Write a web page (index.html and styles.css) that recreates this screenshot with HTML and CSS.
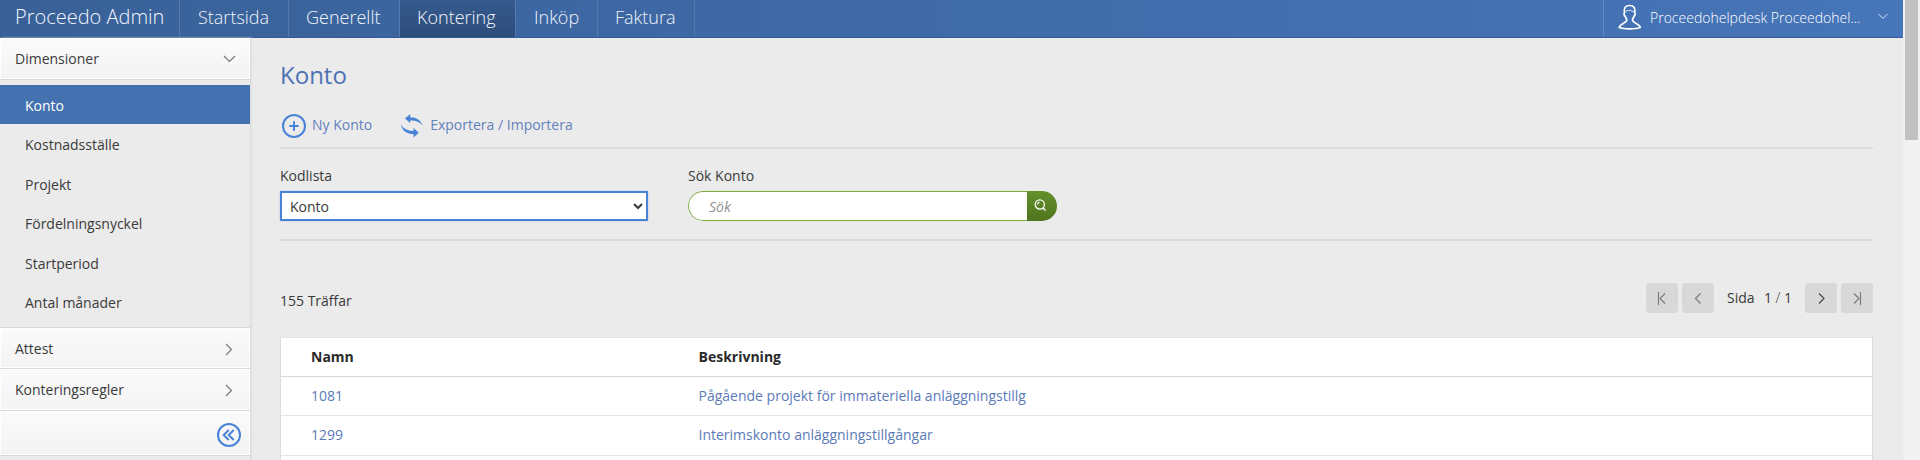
FILE: index.html
```html
<!DOCTYPE html>
<html lang="sv">
<head>
<meta charset="utf-8">
<title>Proceedo Admin</title>
<link rel="stylesheet" href="styles.css">
</head>
<body>
<div class="app">
  <div class="page">
    <header class="topbar">
      <div class="brand"><span>Proceedo Admin</span></div>
      <nav class="tabs">
        <a class="tab tab-start">Startsida</a>
        <a class="tab tab-general">Generellt</a>
        <a class="tab tab-accounting active">Kontering</a>
        <a class="tab tab-purchase">Inköp</a>
        <a class="tab tab-invoice">Faktura</a>
      </nav>
      <div class="user">
        <svg class="user-icon" width="24" height="26" viewBox="0 0 24 26"><path d="M8.700 16C8.700 14.500 7.700 14 7.200 12.200C5.800 11.500 5.800 9.500 6.400 8.700C5.600 4 7.600 1.500 11.600 1.500S17.600 4 16.800 8.700C17.400 9.500 17.400 11.500 16 12.200C15.500 14 14.500 14.500 14.500 16C14.500 19 22 20 22.300 23.500C18 25.300 5.500 25.300 1.200 23.500C1.500 20 8.700 19 8.700 16Z"/><path d="M7.300 8.200C9 5.500 11 7.200 12.300 6.100C13.500 7.400 15 7 16 8.200"/></svg>
        <span class="user-name">Proceedohelpdesk Proceedohel...</span>
        <svg class="user-caret" width="10" height="7" viewBox="0 0 10 7"><path d="M.5 1L5 5.500L9.500 1"/></svg>
      </div>
    </header>
    <div class="body">
      <aside class="sidebar">
        <div class="panel first"><span>Dimensioner</span><svg width="13" height="8" viewBox="0 0 13 8"><path d="M1 1L6.500 6.500L12 1"/></svg></div>
        <ul class="menu">
          <li class="selected">Konto</li>
          <li>Kostnadsställe</li>
          <li>Projekt</li>
          <li>Fördelningsnyckel</li>
          <li>Startperiod</li>
          <li>Antal månader</li>
        </ul>
        <div class="panel short"><span>Attest</span><svg class="right" width="8" height="13" viewBox="0 0 8 13"><path d="M1 1L6.500 6.500L1 12"/></svg></div>
        <div class="panel tall"><span>Konteringsregler</span><svg class="right" width="8" height="13" viewBox="0 0 8 13"><path d="M1 1L6.500 6.500L1 12"/></svg></div>
        <div class="panel collapse"><svg width="24" height="24" viewBox="0 0 24 24"><circle cx="12" cy="12" r="11"/><path d="M11.700 7L6.700 12L11.700 17M16.700 7L11.700 12L16.700 17"/></svg></div>
      </aside>
      <main class="content">
        <h1>Konto</h1>
        <div class="actions">
          <a class="action"><svg width="24" height="24" viewBox="0 0 24 24"><circle cx="12" cy="12" r="11"/><path d="M12 7.300V16.700M7.300 12H16.700"/></svg>Ny Konto</a>
          <a class="action sync"><svg width="24" height="24" viewBox="0 0 24 24"><path class="fill" d="M5 4.500L10.200 0V3.200C16.500 3.200 21 6.500 22.800 11.700C19.500 7.500 15 6.100 10.200 6.500V9Z"/><path class="fill" d="M18.800 18.700L13.600 23.500V20.200C7.500 20.200 2 17 .8 10.500C4 15.500 8.800 17 13.600 16.700V14Z"/></svg>Exportera / Importera</a>
        </div>
        <div class="filters">
          <label class="field"><span>Kodlista</span><select><option>Konto</option></select></label>
          <div class="field"><label for="q">Sök Konto</label>
            <div class="search"><input id="q" type="text" placeholder="Sök"><button aria-label="Sök"><svg width="13" height="13" viewBox="0 0 13 13"><circle cx="5.800" cy="5.500" r="4.600"/><path d="M8.700 8.800L11.700 11.500M3.500 5.500Q3.600 3.500 5.500 3.200"/></svg></button></div>
          </div>
        </div>
        <div class="results">
          <span class="hits">155 Träffar</span>
          <div class="pager">
            <button><svg width="10" height="13" viewBox="0 0 10 13"><path d="M1.500 0V13M8 1.500L3 6.500L8 11.500"/></svg></button>
            <button><svg width="10" height="13" viewBox="0 0 10 13"><path d="M7.500 1.500L2.500 6.500L7.500 11.500"/></svg></button>
            <span class="pages"><span>Sida</span><span>1 <i>/</i> 1</span></span>
            <button class="enabled"><svg width="10" height="13" viewBox="0 0 10 13"><path d="M3 1.500L8 6.500L3 11.500"/></svg></button>
            <button><svg width="10" height="13" viewBox="0 0 10 13"><path d="M8.500 0V13M2 1.500L7 6.500L2 11.500"/></svg></button>
          </div>
        </div>
        <div class="table">
          <div class="row head"><span>Namn</span><span>Beskrivning</span></div>
          <div class="row"><a>1081</a><a>Pågående projekt för immateriella anläggningstillg</a></div>
          <div class="row second"><a>1299</a><a>Interimskonto anläggningstillgångar</a></div>
          <div class="row"></div>
        </div>
      </main>
    </div>
  </div>
  <div class="scrollbar"><div class="thumb"></div></div>
</div>
</body>
</html>
```
FILE: styles.css
```css
* { box-sizing: border-box; }
html { height: 460px; overflow: hidden; }
body { margin: 0; height: 460px; font: 14px/20px "Open Sans", "Noto Sans", sans-serif; color: #3a3a3a; background: #ebebeb; overflow: hidden; }
svg { display: block; flex: none; fill: none; }
.app { display: flex; width: 1920px; height: 460px; overflow: hidden; }
.page { width: 1903px; height: 460px; overflow: hidden; }
.scrollbar { width: 17px; background: #f1f1f1; padding-left: 2px; }
.thumb { width: 13px; height: 140px; background: #c1c1c1; }

.topbar { display: flex; height: 38px; background: linear-gradient(90deg, #396198, #4675b9); border-bottom: 1px solid #345c99; color: #f1f5fb; }
.brand { width: 179px; padding: 3px 0 0 15px; font-size: 20px; line-height: 28px; font-weight: 300; white-space: nowrap; }
.tabs { display: flex; border-right: 1px solid #5479ae; }
.tab { border-left: 1px solid #5479ae; padding: 4px 0 0 18px; height: 37px; font-size: 18px; line-height: 27px; white-space: nowrap; font-weight: 300; }
.tab-start { width: 109px; }
.tab-general { width: 111px; padding-left: 17px; }
.tab-accounting { width: 116px; padding-left: 17px; }
.tab-purchase { width: 82px; }
.tab-invoice { width: 97px; padding-left: 17px; }
.tab.active { background: linear-gradient(#365a8e, #2d4d7b); }
.user { margin-left: auto; width: 300px; border-left: 1px solid #6389c4; display: flex; align-items: center; padding-left: 14px; font-weight: 300; color: #fff; }
.user-icon { stroke: #fff; stroke-width: 1.7; margin-top: -3px; }
.user-icon path + path { stroke-width: 1; }
.user-name { margin: -2px 0 0 8px; width: 211px; white-space: nowrap; }
.user-caret { margin: -4px 0 0 17px; stroke: #dce7f7; }

.body { display: flex; }
.sidebar { width: 251px; height: 422px; border-right: 1px solid #dcdcdc; box-shadow: 1px 0 2px #e2e2e2; }
.panel { display: flex; justify-content: space-between; align-items: center; height: 41px; padding: 0 14px 0 15px; background: linear-gradient(#fbfbfb, #f3f3f3); border-top: 1px solid #d8d8d8; box-shadow: inset 0 0 0 1px #fff; }
.panel svg { stroke: #777; stroke-width: 1.2; }
.panel svg.right { margin-right: 3px; }
.panel.first { height: 42px; border-top: 0; border-bottom: 1px solid #d8d8d8; }
.panel.short { padding-top: 2px; }
.panel.tall { height: 42px; padding-top: 1px; }
.panel.collapse { height: 46px; justify-content: flex-end; padding-right: 9px; border-bottom: 1px solid #d8d8d8; }
.panel.collapse svg { stroke: #4983d8; stroke-width: 2; margin-top: 3px; }
.menu { list-style: none; margin: 0; height: 247px; padding: 5px 0 0; }
.menu li { height: 39.400px; padding: 11px 0 0 25px; }
.menu .selected { background: #4472b0; color: #fff; }

.content { width: 1593px; margin-left: 29px; padding-top: 20px; }
h1 { margin: 0; font-size: 24px; line-height: 34px; font-weight: 400; color: #4c72b4; }
.actions { display: flex; height: 57px; padding: 22px 0 0 2px; border-bottom: 2px solid #dcdcdc; }
.action { display: flex; height: 24px; line-height: 22px; gap: 6px; color: #6482bb; }
.action svg { stroke: #4983d8; stroke-width: 2; }
.action .fill { fill: #4983d8; stroke: none; }
.sync { margin-left: 28px; gap: 6px; }
.filters { display: flex; gap: 40px; height: 92px; padding-top: 17px; border-bottom: 2px solid #dcdcdc; }
.field { display: flex; flex-direction: column; width: 368px; gap: 5px; }
.field > label, .field > span { line-height: 20px; }
select { width: 368px; height: 30px; border: 2px solid #4983d8; border-radius: 0; background: #fff; color: #3a3a3a; padding: 0 0 0 4px; font: 14px "Open Sans", sans-serif; margin: 0; outline: 0; box-shadow: 0 0 2px #b9cbe6; }
.search { display: flex; width: 369px; height: 30px; border-radius: 15px; overflow: hidden; }
.search input { width: 339px; height: 30px; border: 1px solid #7ca93b; border-right: 0; border-radius: 15px 0 0 15px; padding: 1px 0 0 20px; background: #fff; font: italic 14px "Open Sans", sans-serif; outline: 0; }
.search input::placeholder { color: #929292; opacity: 1; }
.search button { width: 30px; border: 0; padding: 0 0 1px 7px; background: linear-gradient(#64902a, #50751f); }
.search svg { stroke: #fff; stroke-width: 1.3; }
.results { display: flex; justify-content: space-between; height: 96px; padding-top: 42px; }
.hits { padding-top: 8px; }
.pager { display: flex; gap: 4px; }
.pager button { width: 32px; height: 30px; border: 0; border-radius: 3px; padding: 0; background: #d8d8d8; display: flex; align-items: center; justify-content: center; }
.pager svg { stroke: #777; stroke-width: 1.1; }
.pager .enabled svg { stroke: #444; }
.pages { display: flex; justify-content: space-between; width: 83px; padding: 5px 9px; white-space: nowrap; }
.pages i { font-style: normal; font-weight: 300; }
.table { border: 1px solid #dcdcdc; border-top-color: #e4e4e4; background: #fff; }
.row { display: grid; grid-template-columns: 387.500px 1fr; height: 39px; padding: 9px 0 0 30px; border-bottom: 1px solid #e4e4e4; }
.row a { color: #5c7ab8; }
.row.head { font-weight: 700; color: #2a2a2a; border-bottom-color: #d8d8d8; }
.row.second { height: 40px; }
```
